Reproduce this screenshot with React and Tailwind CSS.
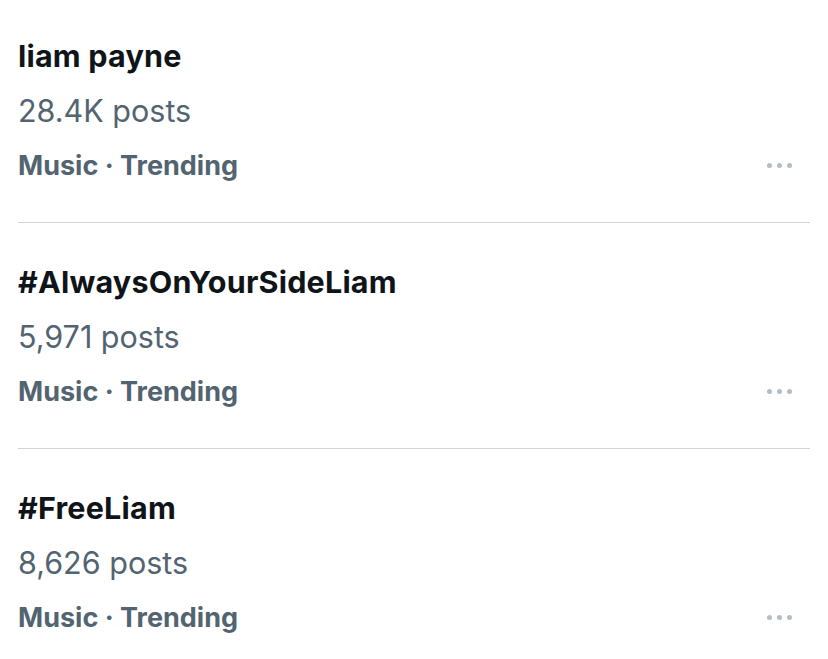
const trends = [
  { title: 'liam payne', posts: '28.4K posts' },
  { title: '#AlwaysOnYourSideLiam', posts: '5,971 posts' },
  { title: '#FreeLiam', posts: '8,626 posts' },
];

function Dots() {
  return (
    <div className="flex items-center gap-[5px] pr-[18px]">
      <span className="w-[5px] h-[5px] rounded-full bg-[#b3bdc6]" />
      <span className="w-[5px] h-[5px] rounded-full bg-[#b3bdc6]" />
      <span className="w-[5px] h-[5px] rounded-full bg-[#b3bdc6]" />
    </div>
  );
}

function App() {
  return (
    <div
      className="w-[828px] h-[659px] overflow-hidden bg-white"
      style={{ fontFamily: 'Inter, "Noto Sans", sans-serif' }}
    >
      <div className="-mt-[3px] pl-[18px] pr-[18px]">
        {trends.map((t, i) => (
          <div
            key={t.title}
            className={`pt-[32px] pb-[29px] ${i < trends.length - 1 ? 'border-b border-[#cfd4d8]' : ''}`}
          >
            <div className="text-[30.5px] leading-[54px] font-bold text-[#0f1419] tracking-[0.2px]">
              {t.title}
            </div>
            <div className="text-[30.5px] leading-[55px] text-[#536471]">
              {t.posts}
            </div>
            <div className="flex items-center justify-between">
              <div className="text-[27px] leading-[55px] font-bold text-[#536471]">
                Music · Trending
              </div>
              <Dots />
            </div>
          </div>
        ))}
      </div>
    </div>
  );
}

export default App;
